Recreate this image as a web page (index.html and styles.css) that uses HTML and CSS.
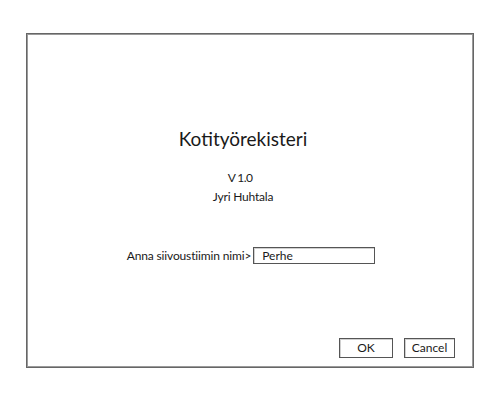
FILE: index.html
```html
<!DOCTYPE html>
<html lang="fi">
<head>
<meta charset="utf-8">
<title>Kotityörekisteri</title>
<link rel="stylesheet" href="styles.css">
</head>
<body>
<div class="dialog">
  <div class="about">
    <h1 class="title">Kotityörekisteri</h1>
    <p class="version">V 1.0</p>
    <p class="author">Jyri Huhtala</p>
  </div>
  <div class="name-row">
    <label class="name-label" for="team">Anna siivoustiimin nimi&gt;</label>
    <div class="name-input" id="team">Perhe</div>
  </div>
  <div class="actions">
    <div class="btn btn-ok">OK</div>
    <div class="btn btn-cancel">Cancel</div>
  </div>
</div>
</body>
</html>
```
FILE: styles.css
```css
html, body {
  margin: 0;
  padding: 0;
  background: #ffffff;
}

body {
  font-family: "Lato", "Noto Sans", sans-serif;
  color: #1a1a1a;
  padding: 33px 26px 0 26px;
}

.dialog {
  box-sizing: border-box;
  width: 448px;
  height: 335px;
  border: 1px solid #666666;
  box-shadow: inset 1px 1px 0 #9a9a9a, inset -1px -1px 0 #9a9a9a;
  padding: 95px 18px 9px 18px;
  display: flex;
  flex-direction: column;
}

.about {
  display: flex;
  flex-direction: column;
  align-items: center;
  margin-right: 14px;
}

.title {
  margin: 0;
  font-size: 19px;
  font-weight: 400;
  line-height: 20px;
}

.version {
  margin: 22px 0 0 0;
  padding-right: 6px;
  font-size: 12px;
  line-height: 14px;
  letter-spacing: -0.6px;
}

.author {
  margin: 5px 0 0 0;
  font-size: 12px;
  line-height: 14px;
  letter-spacing: -0.2px;
}

.name-row {
  margin-top: 43px;
  display: flex;
  justify-content: center;
  align-items: center;
  gap: 2px;
  padding-left: 2px;
}

.name-label {
  font-size: 12px;
  line-height: 14px;
  letter-spacing: -0.15px;
}

.name-input {
  box-sizing: border-box;
  width: 122px;
  height: 17px;
  border: 1px solid #555555;
  box-shadow: inset 1px 1px 0 #d0d0d0;
  padding-left: 8px;
  font-size: 12px;
  line-height: 15px;
}

.actions {
  margin-top: auto;
  display: flex;
  justify-content: flex-end;
  gap: 11px;
}

.btn {
  box-sizing: border-box;
  height: 20px;
  border: 1px solid #555555;
  box-shadow: inset 1px 1px 0 #d0d0d0;
  font-size: 12px;
  line-height: 18px;
  text-align: center;
}

.btn-ok {
  width: 54px;
}

.btn-cancel {
  width: 51px;
}
```
